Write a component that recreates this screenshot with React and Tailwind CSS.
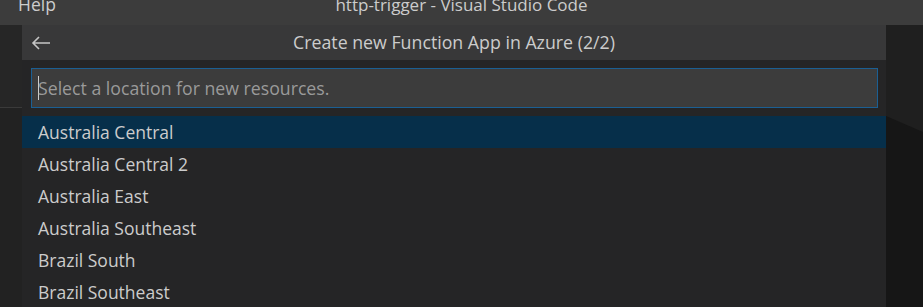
import React from 'react';

const LOCATIONS = [
  'Australia Central',
  'Australia Central 2',
  'Australia East',
  'Australia Southeast',
  'Brazil South',
  'Brazil Southeast',
];

const BackArrow = () => (
  <svg width="20" height="16" viewBox="0 0 20 16" fill="none" stroke="#c5c5c5" strokeWidth="1.6">
    <path d="M19 8H2M8 2L2 8l6 6" />
  </svg>
);

export default function App() {
  return (
    <div className="w-[923px] h-[307px] overflow-hidden flex flex-col bg-[#252526] text-[#cccccc] font-['Open_Sans','Noto_Sans',sans-serif]">
      {/* window title bar, cut off at the top */}
      <div className="h-[25px] shrink-0 bg-[#3c3c3c] flex items-start relative overflow-hidden">
        <span className="ml-[18px] -mt-[4px] text-[17.5px] leading-[17px]">Help</span>
        <span className="absolute left-0 right-0 -top-[4px] text-center text-[17px] leading-[17px]">
          http-trigger - Visual Studio Code
        </span>
      </div>

      <div className="flex flex-1 min-h-0">
        {/* left edge of the editor behind */}
        <div className="w-[22px] shrink-0 flex flex-col">
          <div className="h-[82px] bg-[#262626]" />
          <div className="h-px bg-[#3a3a3a]" />
          <div className="flex-1 bg-[#222222]" />
        </div>

        {/* quick pick */}
        <div className="w-[864px] shrink-0 flex flex-col bg-[#252526]">
          <div className="h-[35px] shrink-0 bg-[#383839] flex items-center relative">
            <div className="ml-[9px] mt-px">
              <BackArrow />
            </div>
            <span className="absolute inset-x-0 text-center text-[17.75px] leading-[35px]">
              Create new Function App in Azure (2/2)
            </span>
          </div>
          <div className="pt-[8px] pl-[9px] pr-[8px] pb-[8px]">
            <div className="h-[40px] border border-[#1b5f93] bg-[#3c3c3c] flex items-center pl-[6px]">
              <span className="w-px h-[24px] bg-[#cccccc] -mr-px" />
              <span className="text-[17.7px] text-[#9a9a9a]">Select a location for new resources.</span>
            </div>
          </div>
          <div className="flex flex-col">
            {LOCATIONS.map((loc, i) => (
              <div
                key={loc}
                className={`h-[32px] shrink-0 flex items-center pl-[16px] text-[17.5px] ${i === 0 ? 'bg-[#062f4a]' : ''}`}
              >
                {loc}
              </div>
            ))}
          </div>
        </div>

        {/* shadowed area to the right */}
        <div className="flex-1 bg-[#161616] flex flex-col">
          <div className="h-[107px] bg-[#1f1f1f] [clip-path:polygon(0_0,100%_0,100%_100%,0_85%)]" />
        </div>
      </div>
    </div>
  );
}
